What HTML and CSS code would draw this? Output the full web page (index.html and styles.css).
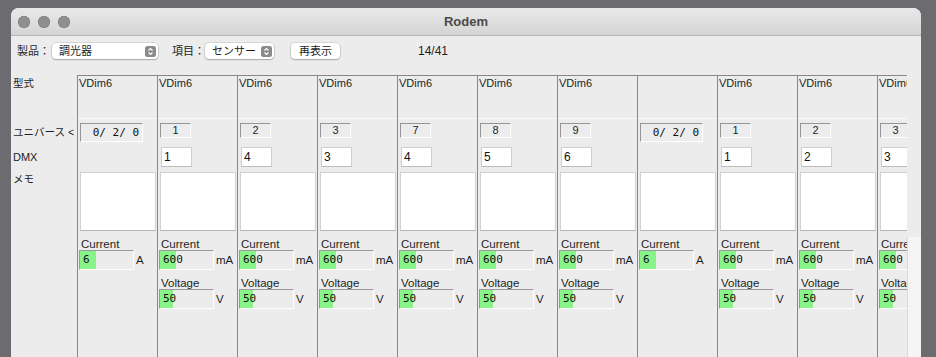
FILE: index.html
```html
<!DOCTYPE html>
<html lang="ja">
<head>
  <meta charset="UTF-8" />
  <title>Rodem</title>
  <link rel="stylesheet" href="styles.css">
</head>
<body>

<div class="window">
  <div class="titlebar">
    <div class="lights">
      <span class="light"></span><span class="light"></span><span class="light"></span>
    </div>
    <div class="title">Rodem</div>
    <div></div>
  </div>

  <div class="toolbar">
    <span class="tb-label">製品：</span>
    <div class="popup product">
      <span>調光器</span>
      <svg class="stepper" width="11" height="11" viewBox="0 0 11 11"><rect width="11" height="11" rx="2.5" fill="#8a8a8a"/><polyline points="3.5,4.5 5.5,2.5 7.5,4.5" fill="none" stroke="#fff" stroke-width="1.2"/><polyline points="3.5,6.5 5.5,8.5 7.5,6.5" fill="none" stroke="#fff" stroke-width="1.2"/></svg>
    </div>
    <span class="tb-label item">項目：</span>
    <div class="popup item">
      <span>センサー</span>
      <svg class="stepper" width="11" height="11" viewBox="0 0 11 11"><rect width="11" height="11" rx="2.5" fill="#8a8a8a"/><polyline points="3.5,4.5 5.5,2.5 7.5,4.5" fill="none" stroke="#fff" stroke-width="1.2"/><polyline points="3.5,6.5 5.5,8.5 7.5,6.5" fill="none" stroke="#fff" stroke-width="1.2"/></svg>
    </div>
    <button class="btn">再表示</button>
    <span class="count">14/41</span>
  </div>

  <div class="table">
    <div class="labels">
      <div class="lbl head-lbl">型式</div>
      <div class="lbl univ-lbl">ユニバース &lt;</div>
      <div class="lbl dmx-lbl">DMX</div>
      <div class="lbl memo-lbl">メモ</div>
    </div>

    <div class="viewport">
      <div class="col">
        <div class="head">VDim6</div>
        <div class="row univ"><div class="uni-box wide">0/ 2/ 0</div></div>
        <div class="row dmx"></div>
        <div class="row memo"><textarea class="memo-box"></textarea></div>
        <div class="sensors">
          <div class="sensor">
            <div class="s-label">Current</div>
            <div class="s-line"><span class="meter" style="--lv:16px">6</span><span class="unit">A</span></div>
          </div>
        </div>
      </div>

      <div class="col">
        <div class="head">VDim6</div>
        <div class="row univ"><div class="uni-box small">1</div></div>
        <div class="row dmx"><input class="dmx-in" value="1"></div>
        <div class="row memo"><textarea class="memo-box"></textarea></div>
        <div class="sensors">
          <div class="sensor">
            <div class="s-label">Current</div>
            <div class="s-line"><span class="meter" style="--lv:16px">600</span><span class="unit">mA</span></div>
          </div>
          <div class="sensor">
            <div class="s-label">Voltage</div>
            <div class="s-line"><span class="meter" style="--lv:13px">50</span><span class="unit">V</span></div>
          </div>
        </div>
      </div>

      <div class="col">
        <div class="head">VDim6</div>
        <div class="row univ"><div class="uni-box small">2</div></div>
        <div class="row dmx"><input class="dmx-in" value="4"></div>
        <div class="row memo"><textarea class="memo-box"></textarea></div>
        <div class="sensors">
          <div class="sensor">
            <div class="s-label">Current</div>
            <div class="s-line"><span class="meter" style="--lv:16px">600</span><span class="unit">mA</span></div>
          </div>
          <div class="sensor">
            <div class="s-label">Voltage</div>
            <div class="s-line"><span class="meter" style="--lv:13px">50</span><span class="unit">V</span></div>
          </div>
        </div>
      </div>

      <div class="col">
        <div class="head">VDim6</div>
        <div class="row univ"><div class="uni-box small">3</div></div>
        <div class="row dmx"><input class="dmx-in" value="3"></div>
        <div class="row memo"><textarea class="memo-box"></textarea></div>
        <div class="sensors">
          <div class="sensor">
            <div class="s-label">Current</div>
            <div class="s-line"><span class="meter" style="--lv:16px">600</span><span class="unit">mA</span></div>
          </div>
          <div class="sensor">
            <div class="s-label">Voltage</div>
            <div class="s-line"><span class="meter" style="--lv:13px">50</span><span class="unit">V</span></div>
          </div>
        </div>
      </div>

      <div class="col">
        <div class="head">VDim6</div>
        <div class="row univ"><div class="uni-box small">7</div></div>
        <div class="row dmx"><input class="dmx-in" value="4"></div>
        <div class="row memo"><textarea class="memo-box"></textarea></div>
        <div class="sensors">
          <div class="sensor">
            <div class="s-label">Current</div>
            <div class="s-line"><span class="meter" style="--lv:16px">600</span><span class="unit">mA</span></div>
          </div>
          <div class="sensor">
            <div class="s-label">Voltage</div>
            <div class="s-line"><span class="meter" style="--lv:13px">50</span><span class="unit">V</span></div>
          </div>
        </div>
      </div>

      <div class="col">
        <div class="head">VDim6</div>
        <div class="row univ"><div class="uni-box small">8</div></div>
        <div class="row dmx"><input class="dmx-in" value="5"></div>
        <div class="row memo"><textarea class="memo-box"></textarea></div>
        <div class="sensors">
          <div class="sensor">
            <div class="s-label">Current</div>
            <div class="s-line"><span class="meter" style="--lv:16px">600</span><span class="unit">mA</span></div>
          </div>
          <div class="sensor">
            <div class="s-label">Voltage</div>
            <div class="s-line"><span class="meter" style="--lv:13px">50</span><span class="unit">V</span></div>
          </div>
        </div>
      </div>

      <div class="col">
        <div class="head">VDim6</div>
        <div class="row univ"><div class="uni-box small">9</div></div>
        <div class="row dmx"><input class="dmx-in" value="6"></div>
        <div class="row memo"><textarea class="memo-box"></textarea></div>
        <div class="sensors">
          <div class="sensor">
            <div class="s-label">Current</div>
            <div class="s-line"><span class="meter" style="--lv:16px">600</span><span class="unit">mA</span></div>
          </div>
          <div class="sensor">
            <div class="s-label">Voltage</div>
            <div class="s-line"><span class="meter" style="--lv:13px">50</span><span class="unit">V</span></div>
          </div>
        </div>
      </div>

      <div class="col">
        <div class="head"></div>
        <div class="row univ"><div class="uni-box wide">0/ 2/ 0</div></div>
        <div class="row dmx"></div>
        <div class="row memo"><textarea class="memo-box"></textarea></div>
        <div class="sensors">
          <div class="sensor">
            <div class="s-label">Current</div>
            <div class="s-line"><span class="meter" style="--lv:16px">6</span><span class="unit">A</span></div>
          </div>
        </div>
      </div>

      <div class="col">
        <div class="head">VDim6</div>
        <div class="row univ"><div class="uni-box small">1</div></div>
        <div class="row dmx"><input class="dmx-in" value="1"></div>
        <div class="row memo"><textarea class="memo-box"></textarea></div>
        <div class="sensors">
          <div class="sensor">
            <div class="s-label">Current</div>
            <div class="s-line"><span class="meter" style="--lv:16px">600</span><span class="unit">mA</span></div>
          </div>
          <div class="sensor">
            <div class="s-label">Voltage</div>
            <div class="s-line"><span class="meter" style="--lv:13px">50</span><span class="unit">V</span></div>
          </div>
        </div>
      </div>

      <div class="col">
        <div class="head">VDim6</div>
        <div class="row univ"><div class="uni-box small">2</div></div>
        <div class="row dmx"><input class="dmx-in" value="2"></div>
        <div class="row memo"><textarea class="memo-box"></textarea></div>
        <div class="sensors">
          <div class="sensor">
            <div class="s-label">Current</div>
            <div class="s-line"><span class="meter" style="--lv:16px">600</span><span class="unit">mA</span></div>
          </div>
          <div class="sensor">
            <div class="s-label">Voltage</div>
            <div class="s-line"><span class="meter" style="--lv:13px">50</span><span class="unit">V</span></div>
          </div>
        </div>
      </div>

      <div class="col">
        <div class="head">VDim6</div>
        <div class="row univ"><div class="uni-box small">3</div></div>
        <div class="row dmx"><input class="dmx-in" value="3"></div>
        <div class="row memo"><textarea class="memo-box"></textarea></div>
        <div class="sensors">
          <div class="sensor">
            <div class="s-label">Current</div>
            <div class="s-line"><span class="meter" style="--lv:16px">600</span><span class="unit">mA</span></div>
          </div>
          <div class="sensor">
            <div class="s-label">Voltage</div>
            <div class="s-line"><span class="meter" style="--lv:13px">50</span><span class="unit">V</span></div>
          </div>
        </div>
      </div>
    </div>

    <div class="scroll"><div class="track"></div></div>
  </div>
</div>

</body>
</html>
```

FILE: styles.css
```css
body {
  margin: 0;
  padding: 8px 15px 0 11px;
  height: 357px;
  box-sizing: border-box;
  overflow: hidden;
  background: #6c6c70;
  font-family: "Liberation Sans", "Noto Sans CJK JP", sans-serif;
  font-size: 11px;
  color: #1e1e1e;
}

.window {
  height: 349px;
  background: #ececec;
  border-radius: 8px 8px 0 0;
  overflow: hidden;
  display: flex;
  flex-direction: column;
}

/* title bar */
.titlebar {
  flex: 0 0 auto;
  height: 27px;
  border-bottom: 1px solid #b5b5b5;
  background: linear-gradient(#e9e9e9, #d4d4d4);
  display: grid;
  grid-template-columns: 1fr auto 1fr;
  align-items: center;
}

.lights {
  display: flex;
  gap: 8px;
  padding-left: 7px;
}

.light {
  width: 12px;
  height: 12px;
  border-radius: 50%;
  background: #8e8e8e;
  box-shadow: inset 0 0 0 0.5px #777;
}

.title {
  font-weight: bold;
  font-size: 13px;
  color: #4a4a4a;
}

/* toolbar */
.toolbar {
  flex: 0 0 auto;
  height: 39px;
  box-sizing: border-box;
  padding: 7px 0 0 6px;
  display: flex;
  align-items: flex-start;
}

.tb-label {
  flex: 0 0 35px;
  line-height: 16px;
  white-space: nowrap;
}

.tb-label.item {
  flex-basis: 31px;
  margin-left: 14px;
}

.popup {
  flex: 0 0 auto;
  height: 16px;
  box-sizing: border-box;
  padding: 0 2px 0 7px;
  background: #fff;
  border-radius: 4px;
  box-shadow: 0 0 0 0.5px rgba(0,0,0,0.18), 0 1px 1.5px rgba(0,0,0,0.22);
  display: flex;
  align-items: center;
  justify-content: space-between;
  line-height: 16px;
  white-space: nowrap;
}

.popup.product {
  width: 106px;
}

.popup.item {
  width: 69px;
}

.stepper {
  display: block;
}

.btn {
  flex: 0 0 49px;
  margin-left: 17px;
  height: 16px;
  padding: 0;
  border: none;
  border-radius: 4px;
  background: #fff;
  box-shadow: 0 0 0 0.5px rgba(0,0,0,0.18), 0 1px 1.5px rgba(0,0,0,0.22);
  font-family: inherit;
  font-size: 11px;
  line-height: 16px;
  color: #1e1e1e;
}

.count {
  margin-left: 78px;
  font-size: 12px;
  line-height: 16px;
}

/* table */
.table {
  flex: 1;
  min-height: 0;
  display: flex;
}

.labels {
  flex: 0 0 66px;
  padding: 1px 0 0 2px;
  box-sizing: border-box;
  font-size: 10.5px;
}

.head-lbl {
  height: 43px;
  line-height: 14px;
}

.univ-lbl {
  height: 24px;
  box-sizing: border-box;
  padding-top: 4px;
  line-height: 19px;
  white-space: nowrap;
}

.dmx-lbl {
  height: 29px;
  box-sizing: border-box;
  padding-top: 4px;
  line-height: 20px;
  font-size: 11px;
}

.memo-lbl {
  line-height: 14px;
}

.viewport {
  flex: 0 0 830px;
  border-top: 1px solid #888;
  display: flex;
  overflow: hidden;
}

.scroll {
  flex: 0 0 14px;
  display: flex;
  flex-direction: column;
}

.scroll .track {
  margin-top: 162px;
  flex: 1;
  background: #f5f5f5;
  border-left: 1px solid #dadada;
}

.col {
  flex: 0 0 80px;
  border-left: 1px solid #888;
  box-sizing: border-box;
  display: flex;
  flex-direction: column;
}

.head {
  height: 43px;
  box-sizing: border-box;
  border-bottom: 1px solid #fafafa;
  padding: 1px 0 0 1px;
  line-height: 13px;
}

.row.univ {
  height: 24px;
}

.row.dmx {
  height: 29px;
}

.row.memo {
  height: 61px;
}

.uni-box {
  box-sizing: border-box;
  margin: 4px 0 0 2px;
  border: 1px solid;
  border-color: #959595 #fff #fff #959595;
}

.uni-box.wide {
  width: 63px;
  height: 19px;
  padding-right: 3px;
  text-align: right;
  font-family: "DejaVu Sans Mono", monospace;
  font-size: 11px;
  line-height: 17px;
  color: #111;
}

.uni-box.small {
  width: 31px;
  height: 15px;
  text-align: center;
  line-height: 13px;
}

.dmx-in {
  display: block;
  width: 31px;
  height: 20px;
  margin: 4px 0 0 3px;
  padding: 0 0 0 2px;
  box-sizing: border-box;
  border: 1px solid #cfcfcf;
  border-bottom-color: #bcbcbc;
  background: #fff;
  font-family: "Liberation Sans", sans-serif;
  font-size: 12px;
  color: #111;
  outline: none;
}

.memo-box {
  display: block;
  width: 76px;
  height: 59px;
  margin: 0 0 0 2px;
  padding: 0;
  box-sizing: border-box;
  border: 1px solid #d0d0d0;
  border-bottom-color: #b4b4b4;
  background: #fff;
  resize: none;
  outline: none;
}

.sensors {
  padding-top: 5px;
  display: flex;
  flex-direction: column;
  gap: 7px;
}

.s-label {
  padding-left: 3px;
  font-size: 11.5px;
  line-height: 12px;
  white-space: nowrap;
}

.s-line {
  display: flex;
  align-items: center;
  margin-left: 1px;
}

.meter {
  flex: 0 0 55px;
  height: 20px;
  box-sizing: border-box;
  padding-left: 3px;
  border: 1px solid;
  border-color: #9a9a9a #fff #fff #9a9a9a;
  background: linear-gradient(90deg, #88f388 var(--lv), transparent var(--lv));
  font-family: "DejaVu Sans Mono", monospace;
  font-size: 11px;
  line-height: 18px;
  color: #111;
}

.unit {
  margin-left: 2px;
  font-size: 11.5px;
}
```
